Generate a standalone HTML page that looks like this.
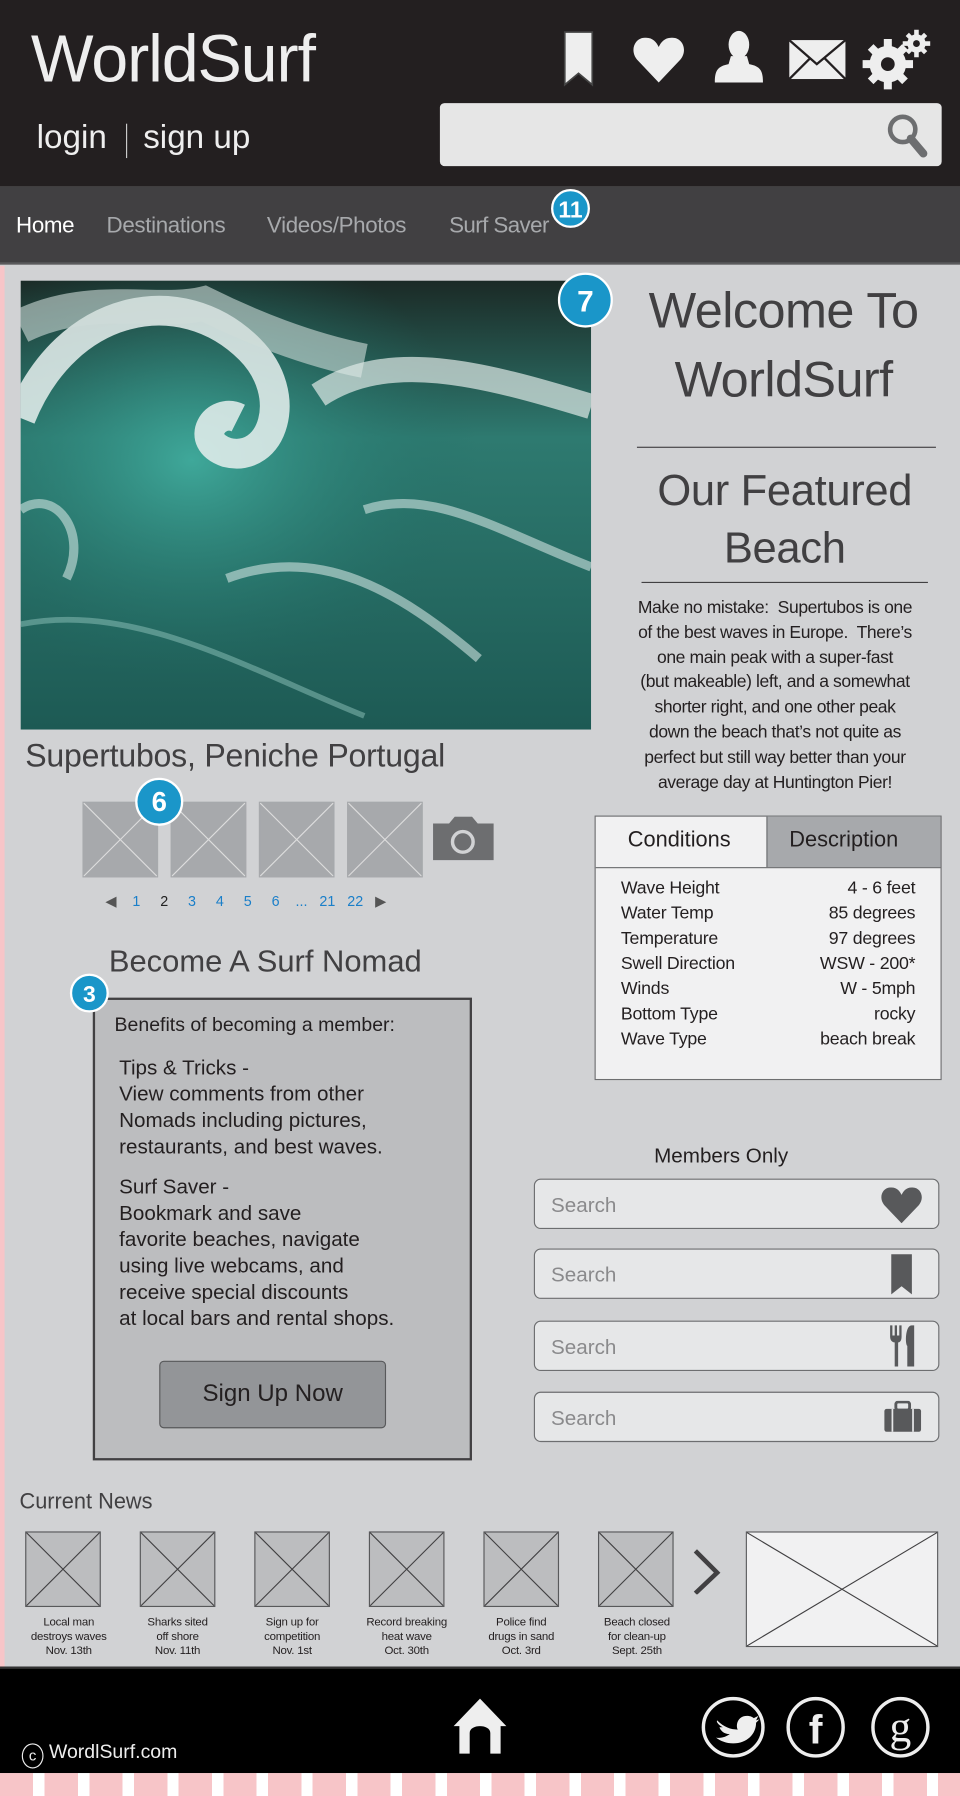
<!DOCTYPE html>
<html><head><meta charset="utf-8"><style>
*{margin:0;padding:0;box-sizing:border-box}
html,body{width:960px;height:1796px;overflow:hidden;background:#fff}
#w{position:absolute;left:0;top:0;width:838px;height:1568px;transform:scale(1.14558,1.14541);transform-origin:0 0;font-family:"Liberation Sans",sans-serif;background:#d1d2d4}
.a{position:absolute}
.t{position:absolute;white-space:nowrap}
.badge{position:absolute;width:34px;height:34px;border-radius:50%;background:#1a96c9;color:#fff;font-weight:bold;font-size:20px;text-align:center;line-height:34px;border:2px solid #fff}
.ph{position:absolute;background:#bcbdbf;border:1px solid #58595b}
.ph svg{position:absolute;left:0;top:0;width:100%;height:100%}
.srch{position:absolute;left:466px;width:354px;height:44px;background:#e6e7e8;border:1px solid #6d6e70;border-radius:6px;color:#8a8a8c;font-size:18px;padding:12px 0 0 14px}
.cap{position:absolute;font-size:10px;color:#231f20;text-align:center;width:90px;line-height:12.5px;letter-spacing:-.2px}
</style></head><body><div id="w">
<div class="a" style="left:0;top:0;width:838px;height:163px;background:#231f20"></div>
<div class="t" style="left:27px;top:18px;font-size:58px;color:#eee;letter-spacing:-1px">WorldSurf</div>
<div class="t" style="left:32px;top:104px;font-size:29px;color:#eee">login</div>
<div class="a" style="left:110px;top:108px;width:1px;height:30px;background:#ccc"></div>
<div class="t" style="left:125px;top:104px;font-size:29px;color:#eee">sign up</div>
<div class="a" style="left:384px;top:90px;width:438px;height:55px;background:#e6e6e6;border-radius:4px"></div>
<svg class="a" style="left:772px;top:98px" width="40" height="40" viewBox="0 0 40 40"><circle cx="16" cy="15" r="11" fill="none" stroke="#6d6e70" stroke-width="4"/><path d="M23 23 L34 36" stroke="#6d6e70" stroke-width="7" stroke-linecap="round"/></svg>
<svg class="a" style="left:490px;top:26px" width="30" height="52"><path d="M3 2 H27 V48 L15 38 L3 48Z" fill="#eee" stroke="#444" stroke-width="1.5"/></svg>
<svg class="a" style="left:552px;top:32px" width="46" height="40" viewBox="0 0 46 40"><path d="M23 40 L4 20 C-3 11 3 0 12 1 C18 1 21 5 23 9 C25 5 28 1 34 1 C43 0 49 11 42 20Z" fill="#eee"/></svg>
<svg class="a" style="left:622px;top:26px" width="46" height="48" viewBox="0 0 46 48"><ellipse cx="23" cy="13" rx="9" ry="12" fill="#eee"/><path d="M16 23 L30 23 L32 30 C42 32 44 36 44 46 H2 C2 36 4 32 14 30Z" fill="#eee"/></svg>
<svg class="a" style="left:688px;top:34px" width="52" height="38"><rect x="1" y="1" width="49" height="34" fill="#eee"/><path d="M1 1 L25 22 L50 1 M1 35 L19 17 M50 35 L32 17" stroke="#231f20" stroke-width="2" fill="none"/></svg>
<svg class="a" style="left:752px;top:24px" width="62" height="56" viewBox="0 0 62 56"><g fill="#eee"><circle cx="23" cy="32" r="16"/><g stroke="#eee" stroke-width="7"><path d="M23 10V54M1 32H45M8 17L38 47M38 17L8 47"/></g><circle cx="48" cy="14" r="8"/><g stroke="#eee" stroke-width="4"><path d="M48 2V26M36 14H60M40 6L56 22M56 6L40 22"/></g></g><circle cx="23" cy="32" r="6" fill="#231f20"/><circle cx="48" cy="14" r="3" fill="#231f20"/></svg>
<div class="a" style="left:0;top:163px;width:838px;height:68px;background:#414042;border-bottom:2px solid #5a5a5c"></div>
<div class="t" style="left:14px;top:186px;font-size:19.5px;color:#fff;letter-spacing:-.3px">Home</div>
<div class="t" style="left:93px;top:186px;font-size:19.5px;color:#a7a9ac;letter-spacing:-.3px">Destinations</div>
<div class="t" style="left:233px;top:186px;font-size:19.5px;color:#a7a9ac;letter-spacing:-.3px">Videos/Photos</div>
<div class="t" style="left:392px;top:186px;font-size:19.5px;color:#a7a9ac;letter-spacing:-.5px">Surf Saver</div>
<div class="badge" style="left:481px;top:165px">11</div>
<div class="a" style="left:0;top:232px;width:4px;height:1223px;background:#f7c5c8"></div>
<svg class="a" style="left:18px;top:245px" width="498" height="392" viewBox="0 0 498 392">
<defs><linearGradient id="g1" x1="0" y1="0" x2="0" y2="1"><stop offset="0" stop-color="#1b2a26"/><stop offset=".35" stop-color="#2e7a70"/><stop offset="1" stop-color="#1d5a54"/></linearGradient>
<radialGradient id="g2" cx=".3" cy=".4" r=".5"><stop offset="0" stop-color="#3fa89a"/><stop offset="1" stop-color="#1f6a62" stop-opacity="0"/></radialGradient></defs>
<rect width="498" height="392" fill="url(#g1)"/>
<rect width="498" height="392" fill="url(#g2)"/>
<path d="M0 120 C40 20 140 0 200 60 C240 100 220 160 180 150 C150 140 170 110 190 120" fill="none" stroke="#e8f0ee" stroke-width="26" opacity=".85"/>
<path d="M0 40 C60 10 120 30 160 20 C200 40 250 60 300 70" fill="none" stroke="#cfdcd9" stroke-width="30" opacity=".6"/>
<path d="M260 100 C320 60 400 80 498 110" fill="none" stroke="#dfe9e7" stroke-width="22" opacity=".7"/>
<path d="M0 200 C30 180 60 220 40 260 M180 260 C260 230 330 270 400 330 M300 200 C360 180 420 220 498 250" fill="none" stroke="#cfe3df" stroke-width="8" opacity=".6"/>
<path d="M0 300 C100 280 200 340 300 380" fill="none" stroke="#8fc3bb" stroke-width="5" opacity=".5"/>
</svg>
<div class="t" style="left:22px;top:644px;font-size:28px;color:#414042;letter-spacing:-.2px">Supertubos, Peniche Portugal</div>
<div class="ph" style="left:72px;top:700px;width:66px;height:66px;background:#a7a9ac;border-color:#a7a9ac"><svg viewBox="0 0 66 66" preserveAspectRatio="none"><path d="M0 0L66 66M66 0L0 66" stroke="#ddd" stroke-width="1"/></svg></div>
<div class="ph" style="left:149px;top:700px;width:66px;height:66px;background:#a7a9ac;border-color:#a7a9ac"><svg viewBox="0 0 66 66" preserveAspectRatio="none"><path d="M0 0L66 66M66 0L0 66" stroke="#ddd" stroke-width="1"/></svg></div>
<div class="ph" style="left:226px;top:700px;width:66px;height:66px;background:#a7a9ac;border-color:#a7a9ac"><svg viewBox="0 0 66 66" preserveAspectRatio="none"><path d="M0 0L66 66M66 0L0 66" stroke="#ddd" stroke-width="1"/></svg></div>
<div class="ph" style="left:303px;top:700px;width:66px;height:66px;background:#a7a9ac;border-color:#a7a9ac"><svg viewBox="0 0 66 66" preserveAspectRatio="none"><path d="M0 0L66 66M66 0L0 66" stroke="#ddd" stroke-width="1"/></svg></div>
<div class="badge" style="left:118px;top:679px;width:42px;height:42px;line-height:40px;font-size:24px">6</div>
<svg class="a" style="left:378px;top:713px" width="53" height="38"><path d="M0 6 H14 L19 0 H34 L39 6 H53 V38 H0Z" fill="#6d6e70"/><circle cx="26" cy="22" r="9" fill="none" stroke="#d1d2d4" stroke-width="3"/></svg>
<div class="t" style="left:92px;top:779px;font-size:12.5px;color:#1a7fc9">
<span style="color:#555">◀</span>&nbsp;&nbsp;&nbsp;&nbsp;1&nbsp;&nbsp;&nbsp;&nbsp;&nbsp;<span style="color:#222">2</span>&nbsp;&nbsp;&nbsp;&nbsp;&nbsp;3&nbsp;&nbsp;&nbsp;&nbsp;&nbsp;4&nbsp;&nbsp;&nbsp;&nbsp;&nbsp;5&nbsp;&nbsp;&nbsp;&nbsp;&nbsp;6&nbsp;&nbsp;&nbsp;&nbsp;...&nbsp;&nbsp;&nbsp;21&nbsp;&nbsp;&nbsp;22&nbsp;&nbsp;&nbsp;<span style="color:#555">▶</span></div>
<div class="t" style="left:540px;top:242px;width:288px;text-align:center;font-size:44px;color:#414042;line-height:60px;white-space:normal;letter-spacing:-.5px">Welcome To WorldSurf</div>
<div class="badge" style="left:487px;top:238px;width:48px;height:48px;line-height:46px;font-size:26px">7</div>
<div class="a" style="left:556px;top:390px;width:261px;height:1px;background:#414042"></div>
<div class="t" style="left:545px;top:404px;width:280px;text-align:center;font-size:38px;color:#414042;line-height:50px;white-space:normal;letter-spacing:-.3px">Our Featured Beach</div>
<div class="a" style="left:560px;top:508px;width:250px;height:1px;background:#414042"></div>
<div class="t" style="left:532px;top:520px;width:305px;text-align:center;font-size:15.3px;color:#231f20;line-height:21.8px;white-space:nowrap;letter-spacing:-.35px;margin-left:-8px">Make no mistake:&nbsp; Supertubos is one<br>of the best waves in Europe.&nbsp; There’s<br>one main peak with a super-fast<br>(but makeable) left, and a somewhat<br>shorter right, and one other peak<br>down the beach that’s not quite as<br>perfect but still way better than your<br>average day at Huntington Pier!</div>
<div class="a" style="left:519px;top:712px;width:303px;height:231px;background:#f1f1f2;border:1px solid #6d6e70"></div>
<div class="a" style="left:669px;top:713px;width:152px;height:44px;background:#a7a9ac;border-left:1px solid #6d6e70"></div>
<div class="a" style="left:520px;top:757px;width:301px;height:1px;background:#6d6e70"></div>
<div class="t" style="left:548px;top:723px;font-size:19px;color:#231f20">Conditions</div>
<div class="t" style="left:689px;top:723px;font-size:19px;color:#231f20">Description</div>
<div class="a" style="left:542px;top:765px;width:257px;font-size:15.5px;color:#231f20;line-height:22px;letter-spacing:-.2px">
<div style="display:flex;justify-content:space-between"><span>Wave Height</span><span>4 - 6 feet</span></div>
<div style="display:flex;justify-content:space-between"><span>Water Temp</span><span>85 degrees</span></div>
<div style="display:flex;justify-content:space-between"><span>Temperature</span><span>97 degrees</span></div>
<div style="display:flex;justify-content:space-between"><span>Swell Direction</span><span>WSW - 200*</span></div>
<div style="display:flex;justify-content:space-between"><span>Winds</span><span>W - 5mph</span></div>
<div style="display:flex;justify-content:space-between"><span>Bottom Type</span><span>rocky</span></div>
<div style="display:flex;justify-content:space-between"><span>Wave Type</span><span>beach break</span></div>
</div>
<div class="t" style="left:95px;top:824px;font-size:27px;color:#414042">Become A Surf Nomad</div>
<div class="a" style="left:81px;top:871px;width:331px;height:404px;background:#bcbdbf;border:2px solid #414042"></div>
<div class="badge" style="left:61px;top:850px">3</div>
<div class="t" style="left:100px;top:885px;font-size:17px;color:#231f20">Benefits of becoming a member:</div>
<div class="t" style="left:104px;top:921px;font-size:18px;color:#231f20;line-height:23px">Tips &amp; Tricks -<br>View comments from other<br>Nomads including pictures,<br>restaurants, and best waves.</div>
<div class="t" style="left:104px;top:1025px;font-size:18px;color:#231f20;line-height:23px">Surf Saver -<br>Bookmark and save<br>favorite beaches, navigate<br>using live webcams, and<br>receive special discounts<br>at local bars and rental shops.</div>
<div class="a" style="left:139px;top:1188px;width:198px;height:59px;background:#939598;border:1px solid #58595b;border-radius:4px;font-size:21px;color:#231f20;text-align:center;line-height:56px">Sign Up Now</div>
<div class="t" style="left:571px;top:999px;font-size:18px;color:#231f20">Members Only</div>
<div class="srch" style="top:1029px">Search</div>
<div class="srch" style="top:1090px">Search</div>
<div class="srch" style="top:1153px">Search</div>
<div class="srch" style="top:1215px">Search</div>
<svg class="a" style="left:768px;top:1036px" width="38" height="32" viewBox="0 0 46 40"><path d="M23 40 L4 20 C-3 11 3 0 12 1 C18 1 21 5 23 9 C25 5 28 1 34 1 C43 0 49 11 42 20Z" fill="#58595b"/></svg>
<svg class="a" style="left:777px;top:1094px" width="20" height="38"><path d="M1 1H19V36L10 29L1 36Z" fill="#58595b"/></svg>
<svg class="a" style="left:776px;top:1157px" width="24" height="36"><path d="M1 0V10C1 14 4 15 5 15V36H8V15C9 15 11 14 11 10V0H9V9H7V0H5V9H3V0Z" fill="#58595b"/><path d="M16 36V18C14 17 14 0 20 0H22V36Z" fill="#58595b"/></svg>
<svg class="a" style="left:771px;top:1223px" width="34" height="28"><rect x="11" y="1" width="12" height="7" rx="2" fill="none" stroke="#58595b" stroke-width="2.5"/><rect x="1" y="7" width="32" height="20" rx="2" fill="#58595b"/><path d="M8 7V27M26 7V27" stroke="#e6e7e8" stroke-width="1.5"/></svg>
<div class="t" style="left:17px;top:1301px;font-size:19px;color:#414042">Current News</div>
<div class="ph" style="left:22px;top:1337px;width:66px;height:66px"><svg viewBox="0 0 66 66" preserveAspectRatio="none"><path d="M0 0L66 66M66 0L0 66" stroke="#414042"/></svg></div>
<div class="ph" style="left:122px;top:1337px;width:66px;height:66px"><svg viewBox="0 0 66 66" preserveAspectRatio="none"><path d="M0 0L66 66M66 0L0 66" stroke="#414042"/></svg></div>
<div class="ph" style="left:222px;top:1337px;width:66px;height:66px"><svg viewBox="0 0 66 66" preserveAspectRatio="none"><path d="M0 0L66 66M66 0L0 66" stroke="#414042"/></svg></div>
<div class="ph" style="left:322px;top:1337px;width:66px;height:66px"><svg viewBox="0 0 66 66" preserveAspectRatio="none"><path d="M0 0L66 66M66 0L0 66" stroke="#414042"/></svg></div>
<div class="ph" style="left:422px;top:1337px;width:66px;height:66px"><svg viewBox="0 0 66 66" preserveAspectRatio="none"><path d="M0 0L66 66M66 0L0 66" stroke="#414042"/></svg></div>
<div class="ph" style="left:522px;top:1337px;width:66px;height:66px"><svg viewBox="0 0 66 66" preserveAspectRatio="none"><path d="M0 0L66 66M66 0L0 66" stroke="#414042"/></svg></div>
<svg class="a" style="left:604px;top:1352px" width="26" height="40"><path d="M3 2L22 21L3 39" fill="none" stroke="#414042" stroke-width="4"/></svg>
<div class="ph" style="left:651px;top:1337px;width:168px;height:101px;background:#f1f1f2"><svg viewBox="0 0 168 101" preserveAspectRatio="none"><path d="M0 0L168 101M168 0L0 101" stroke="#414042"/></svg></div>
<div class="cap" style="left:15px;top:1411px">Local man<br>destroys waves<br>Nov. 13th</div>
<div class="cap" style="left:110px;top:1411px">Sharks sited<br>off shore<br>Nov. 11th</div>
<div class="cap" style="left:210px;top:1411px">Sign up for<br>competition<br>Nov. 1st</div>
<div class="cap" style="left:310px;top:1411px">Record breaking<br>heat wave<br>Oct. 30th</div>
<div class="cap" style="left:410px;top:1411px">Police find<br>drugs in sand<br>Oct. 3rd</div>
<div class="cap" style="left:511px;top:1411px">Beach closed<br>for clean-up<br>Sept. 25th</div>
<div class="a" style="left:0;top:1455px;width:838px;height:93px;background:#000;border-top:2px solid #333"></div>
<div class="a" style="left:0;top:1548px;width:838px;height:20px;background:repeating-linear-gradient(90deg,#f7c5c8 0 29px,#fff 29px 39px)"></div>
<svg class="a" style="left:392px;top:1481px" width="54" height="52"><path d="M27 2L50 26H45V50H36V32C36 24 18 24 18 32V50H9V26H4Z" fill="#eee"/></svg>
<div class="t" style="left:19px;top:1520px;font-size:17px;color:#eee"><span style="display:inline-block;width:19px;height:22px;border:1.5px solid #eee;border-radius:50%;font-size:13px;text-align:center;line-height:19px;vertical-align:-2px">c</span> WordlSurf.com</div>
<svg class="a" style="left:612px;top:1480px" width="206" height="56"><g fill="none" stroke="#eee" stroke-width="3"><ellipse cx="28" cy="28" rx="26" ry="25"/><ellipse cx="100" cy="28" rx="24" ry="25"/><ellipse cx="174" cy="28" rx="24" ry="25"/></g>
<path d="M14 22C20 28 26 30 32 30C30 26 32 18 40 18C43 18 45 19 46 20L50 18L48 22L51 21L48 24C48 34 40 42 28 42C22 42 17 40 13 37C18 38 22 36 25 34C20 34 17 31 16 28L19 28C15 26 13 23 14 22Z" fill="#eee"/>
<text x="100" y="42" font-family="Liberation Sans" font-weight="bold" font-size="36" fill="#eee" text-anchor="middle">f</text>
<text x="174" y="40" font-family="Liberation Serif" font-size="38" fill="#eee" text-anchor="middle">g</text></svg>
</div></body></html>
